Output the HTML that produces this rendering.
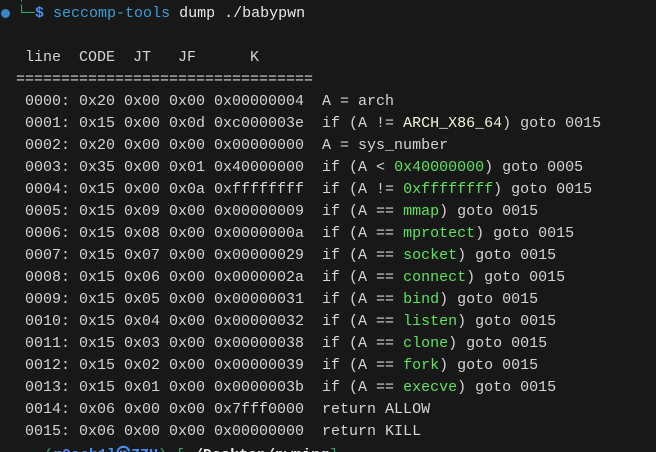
<!DOCTYPE html>
<html><head><meta charset="utf-8"><style>
html,body{margin:0;padding:0;background:#181818;width:656px;height:452px;overflow:hidden}
body{position:relative;font-family:"Liberation Mono","DejaVu Sans Mono",monospace;font-size:15px;color:#d4d4d4}
.l{position:absolute;left:25px;white-space:pre;line-height:22px;height:22px}
.g{color:#5fe35f}
.y{color:#f4f4d8}
.c{color:#3b9fd8}
.b{color:#e8e8e8}
</style></head><body>
<div style="position:absolute;left:1px;top:9px;width:9px;height:9px;border-radius:50%;background:#3a86c4"></div>
<div class="l" style="left:17px;top:-17px;color:#3aa06a">│</div>
<div class="l" style="left:17px;top:3px"><span style="color:#3aa06a">└─</span><span style="color:#4a8ef0;font-weight:bold">$</span> <span class="c">seccomp-tools</span> <span class="b">dump ./babypwn</span></div>
<div class="l" style="top:47px">line  CODE  JT   JF      K</div>
<div class="l" style="left:16px;top:69px">=================================</div>
<div class="l" style="top:91px">0000: 0x20 0x00 0x00 0x00000004  A = arch</div>
<div class="l" style="top:113px">0001: 0x15 0x00 0x0d 0xc000003e  if (A != <span class="y">ARCH_X86_64</span>) goto 0015</div>
<div class="l" style="top:135px">0002: 0x20 0x00 0x00 0x00000000  A = sys_number</div>
<div class="l" style="top:157px">0003: 0x35 0x00 0x01 0x40000000  if (A &lt; <span class="g">0x40000000</span>) goto 0005</div>
<div class="l" style="top:179px">0004: 0x15 0x00 0x0a 0xffffffff  if (A != <span class="g">0xffffffff</span>) goto 0015</div>
<div class="l" style="top:201px">0005: 0x15 0x09 0x00 0x00000009  if (A == <span class="g">mmap</span>) goto 0015</div>
<div class="l" style="top:223px">0006: 0x15 0x08 0x00 0x0000000a  if (A == <span class="g">mprotect</span>) goto 0015</div>
<div class="l" style="top:245px">0007: 0x15 0x07 0x00 0x00000029  if (A == <span class="g">socket</span>) goto 0015</div>
<div class="l" style="top:267px">0008: 0x15 0x06 0x00 0x0000002a  if (A == <span class="g">connect</span>) goto 0015</div>
<div class="l" style="top:289px">0009: 0x15 0x05 0x00 0x00000031  if (A == <span class="g">bind</span>) goto 0015</div>
<div class="l" style="top:311px">0010: 0x15 0x04 0x00 0x00000032  if (A == <span class="g">listen</span>) goto 0015</div>
<div class="l" style="top:333px">0011: 0x15 0x03 0x00 0x00000038  if (A == <span class="g">clone</span>) goto 0015</div>
<div class="l" style="top:355px">0012: 0x15 0x02 0x00 0x00000039  if (A == <span class="g">fork</span>) goto 0015</div>
<div class="l" style="top:377px">0013: 0x15 0x01 0x00 0x0000003b  if (A == <span class="g">execve</span>) goto 0015</div>
<div class="l" style="top:399px">0014: 0x06 0x00 0x00 0x7fff0000  return ALLOW</div>
<div class="l" style="top:421px">0015: 0x06 0x00 0x00 0x00000000  return KILL</div>
<div class="l" style="left:17px;top:445px"><span style="color:#3aa06a">┌──(</span><span style="color:#4a8ef0;font-weight:bold">r0ach1l㉿ZZU</span><span style="color:#3aa06a">)-[</span><span class="b" style="font-weight:bold">~/Desktop/pwning</span><span style="color:#3aa06a">]</span></div>
</body></html>
